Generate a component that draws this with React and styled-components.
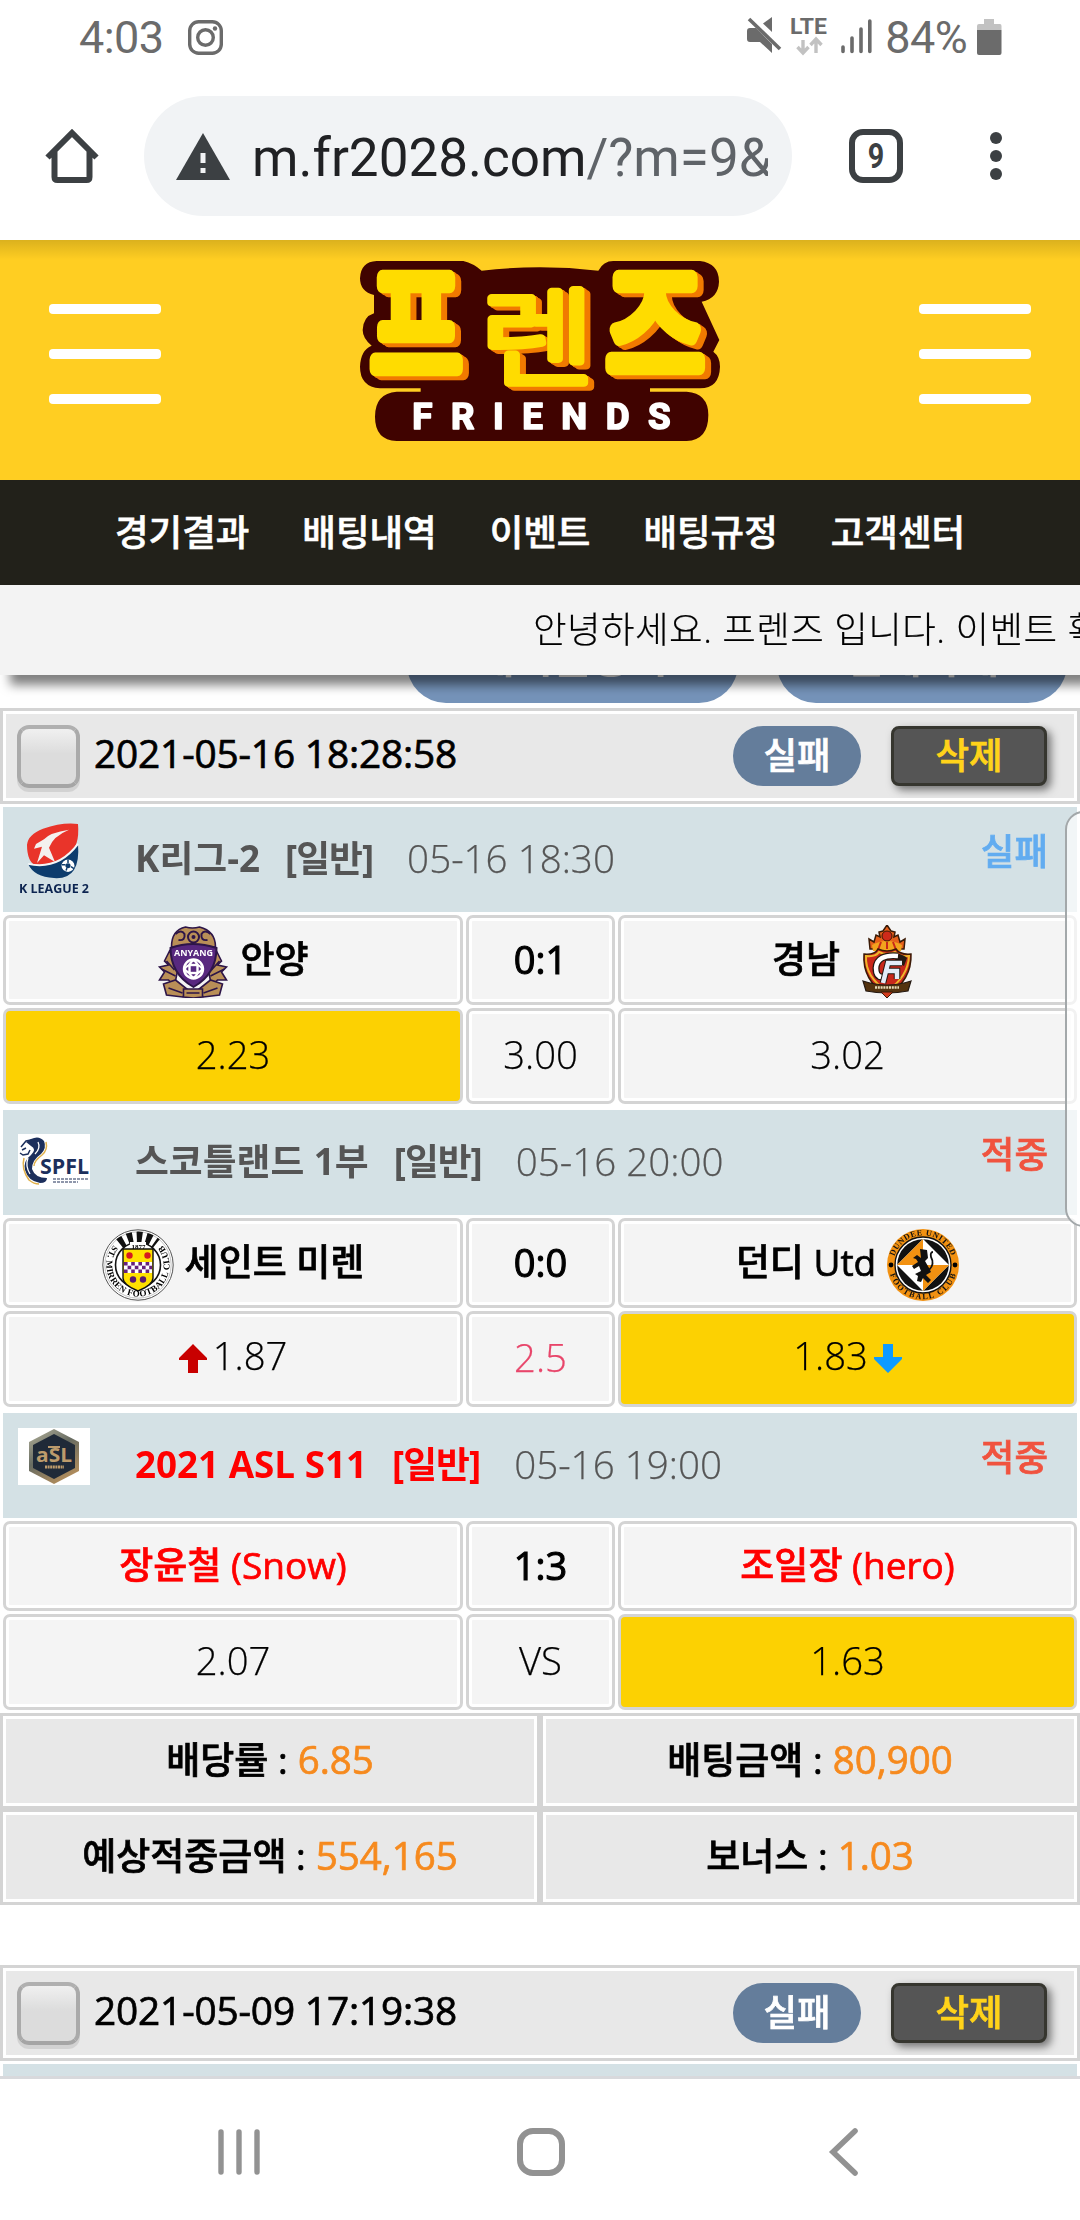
import styled, { createGlobalStyle } from "styled-components";

const GlobalStyle = createGlobalStyle`
  * {
    box-sizing: border-box;
  }

  body {
    margin: 0;
    background: #fff;
    font-family: "Open Sans", "Noto Sans CJK KR", sans-serif;
    line-height: 1;
    color: #000;
  }
`;

const Screen = styled.div`
  width: 1080px;
  height: 2220px;
  display: flex;
  flex-direction: column;
  overflow: hidden;
  position: relative;
  background: #fff;
`;

const StatusBar = styled.div`
  height: 60px;
  flex: none;
  display: flex;
  align-items: center;
  justify-content: space-between;
  padding: 14px 78px 0 79px;
  font-family: Roboto, sans-serif;
  font-size: 45px;
  color: #6b6b6b;

  svg {
    display: block;
    overflow: visible;
  }
`;

const StatusGroup = styled.div`
  display: flex;
  align-items: center;
  gap: ${(p) => p.$gap}px;

  span {
    letter-spacing: -0.6px;
  }
`;

const BrowserBar = styled.div`
  height: 180px;
  flex: none;
  display: flex;
  align-items: center;
  padding: 12px 78px 0 45px;

  svg {
    display: block;
    flex: none;
  }
`;

const UrlField = styled.div`
  width: 648px;
  height: 120px;
  margin: 0 57px 0 45px;
  padding: 0 24px 0 32px;
  border-radius: 60px;
  background: #f1f3f5;
  display: flex;
  align-items: center;
  gap: 22px;
`;

const Url = styled.div`
  flex: 1;
  padding-top: 3px;
  overflow: hidden;
  white-space: nowrap;
  font-family: Roboto, sans-serif;
  font-size: 53px;
  line-height: 70px;
  color: #202124;

  span {
    color: #5f6368;
  }
`;

const TabCount = styled.div`
  width: 54px;
  height: 54px;
  border: 6px solid #3c4043;
  border-radius: 14px;
  display: flex;
  align-items: center;
  justify-content: center;
  font: 700 35px Roboto, sans-serif;
  color: #3c4043;

  span {
    transform: scaleX(0.82);
  }
`;

const Dots = styled.div`
  margin-left: auto;
  display: flex;
  flex-direction: column;
  gap: 6px;

  i {
    width: 12px;
    height: 12px;
    border-radius: 50%;
    background: #3c4043;
  }
`;

const SiteHeader = styled.header`
  height: 240px;
  flex: none;
  display: flex;
  justify-content: space-between;
  align-items: flex-start;
  padding: 21px 49px 0;
  background: linear-gradient(rgba(0, 0, 0, 0.14), rgba(0, 0, 0, 0) 20px),
    #ffce22;
`;

const Burger = styled.div`
  width: 112px;
  margin-top: 43px;
  display: flex;
  flex-direction: column;
  gap: 35px;

  i {
    height: 10px;
    border-radius: 4px;
    background: #fff;
  }
`;

const LogoLetters = styled.g`
  font-family: "Noto Sans CJK KR", sans-serif;
  font-size: 300px;
  font-weight: 400;
  fill: #ffdc00;
  stroke: #ffdc00;
  stroke-width: 34px;
  stroke-linejoin: round;
  filter: drop-shadow(9px 6px 0 #f17a00) drop-shadow(9px 6px 0 #f17a00);

  .dense {
    font-weight: 300;
    stroke-width: 22px;
  }
`;

const Nav = styled.nav`
  height: 105px;
  flex: none;
  display: flex;
  align-items: center;
  gap: 53px;
  padding-left: 115px;
  background: #22211a;
  color: #fff;
  font-size: 36.5px;
  font-weight: 500;
  -webkit-text-stroke: 0.6px;
`;

const Notice = styled.div`
  height: 90px;
  flex: none;
  position: relative;
  z-index: 1;
  display: flex;
  align-items: center;
  padding: 0 0 1px 533px;
  background: #f3f3f3;
  box-shadow: 10px 10px 10px rgba(0, 0, 0, 0.5);
  font-size: 36.5px;
  font-weight: 300;
  letter-spacing: 0.45px;
  white-space: nowrap;
  -webkit-text-stroke: 0.2px;
`;

const ActionStrip = styled.div`
  height: 33px;
  flex: none;
  overflow: hidden;
  display: flex;
  align-items: flex-end;
  gap: 39px;
  padding: 0 0 5px 407px;
`;

const Action = styled.div`
  width: ${(p) => p.$width}px;
  height: 78px;
  border-radius: 39px;
  background: #7593b9;
  color: #fff;
  font-size: 42px;
  font-weight: 700;
  line-height: 64px;
  text-align: center;
`;

const Slip = styled.section`
  flex: none;
  display: flex;
  flex-direction: column;
  gap: 3px;
`;

const SlipHead = styled.div`
  height: 96px;
  display: flex;
  align-items: center;
  padding: 0 30px 0 14px;
  border: 3px solid #d4d4d4;
  outline: 3px solid #fff;
  outline-offset: -6px;
  background: #e8e8e8;
  font-size: 36.5px;
  font-weight: 500;
  -webkit-text-stroke: 0.7px;
`;

const SlipDate = styled.span`
  padding-bottom: 5px;
  font-size: 38.8px;
  letter-spacing: -0.15px;
`;

const Check = styled.div`
  width: 63px;
  height: 63px;
  margin-right: 14px;
  border: 4px solid;
  border-color: #b0b0b0 #aaa #a5a5a5;
  border-radius: 12px;
  background: linear-gradient(#f0f0f0, #dcdcdc 45%);
  box-shadow: 0 4px 0 #d2d2d2;
`;

const Badge = styled.div`
  width: 128px;
  height: 60px;
  margin-left: auto;
  padding-bottom: 2px;
  border-radius: 30px;
  background: #647d9b;
  color: #fff;
  display: flex;
  align-items: center;
  justify-content: center;
`;

const DeleteButton = styled.div`
  width: 156px;
  height: 60px;
  margin-left: 30px;
  padding-bottom: 2px;
  border: 3px solid #36362f;
  border-radius: 8px;
  background: #555;
  box-shadow: 4px 4px 8px rgba(0, 0, 0, 0.5);
  color: #ffd31a;
  display: flex;
  align-items: center;
  justify-content: center;
`;

const League = styled.div`
  height: 105px;
  margin: 0 3px;
  padding: 0 29px 3px 15px;
  display: flex;
  align-items: center;
  background: #d4e1e5;
  color: ${(p) => (p.$hot ? "#f00" : "#555")};
  font-size: 36.8px;
  white-space: nowrap;

  b {
    font-weight: 700;
    margin-right: 25px;
  }
  b + b {
    letter-spacing: -1px;
  }
  time {
    color: #555;
    font-size: 38.6px;
    font-weight: 300;
    margin-left: 9px;
    -webkit-text-stroke: 0.25px;
  }
`;

const LeagueLogo = styled.div`
  width: 72px;
  margin: ${(p) => p.$top}px 45px 0 0;
  align-self: flex-start;

  svg {
    display: block;
    overflow: visible;
  }
`;

const Result = styled.div`
  margin: 0 0 13px auto;
  font-size: 36.5px;
  font-weight: 500;
  -webkit-text-stroke: 0.7px;
  color: ${(p) => (p.$hit ? "#f0533f" : "#62acf0")};
`;

const Match = styled.div`
  display: grid;
  grid-template-columns: 460px 149px 459px;
  grid-template-rows: 90px 96px;
  gap: 3px;
  margin: 0 3px 3px;
`;

const Cell = styled.div`
  display: flex;
  align-items: center;
  justify-content: center;
  gap: ${(p) => p.$gap || 0}px;
  padding-bottom: 3px;
  border: 3px solid #d4d4d4;
  border-radius: 7px;
  background: #f4f4f4;
  box-shadow: inset 0 0 0 3px #fff;
  color: ${(p) => p.$color || "#000"};
  font-size: 37px;
  font-weight: 500;

  span {
    -webkit-text-stroke: 0.7px;
  }

  svg {
    display: block;
    flex: none;
    margin-top: 6px;
  }
`;

const ScoreCell = styled(Cell)`
  font-size: 38px;

  span {
    -webkit-text-stroke: 1.1px;
  }
`;

const OddsCell = styled(Cell)`
  padding-bottom: ${(p) => (p.$moved ? 7 : 4)}px;
  background: ${(p) => (p.$picked ? "#fcd102" : "#f4f4f4")};
  box-shadow: ${(p) => (p.$picked ? "none" : "inset 0 0 0 3px #fff")};
  font-size: 38.3px;
  font-weight: 300;

  span {
    -webkit-text-stroke: 0.25px;
  }
`;

const Totals = styled.div`
  display: grid;
  grid-template-columns: 540px 540px;
  grid-auto-rows: 96px;
`;

const Total = styled.div`
  display: flex;
  align-items: center;
  justify-content: center;
  gap: 10px;
  padding-bottom: 4px;
  border: 3px solid #d4d4d4;
  outline: 3px solid #fff;
  outline-offset: -6px;
  background: #e8e8e8;
  font-size: 37px;
  font-weight: 500;
  -webkit-text-stroke: 0.7px;

  em {
    font-size: 38.5px;
    font-style: normal;
    color: #f68a1e;
  }
`;

const Spacer = styled.div`
  height: 60px;
  flex: none;
`;

const SlipPeek = styled.div`
  height: 12px;
  margin: 0 3px;
  background: #d4e1e5;
`;

const SystemNav = styled.div`
  height: 144px;
  flex: none;
  display: flex;
  border-top: 3px solid #d8d9dc;
  background: #fff;
  padding: 49px 0 0 217px;

  svg {
    display: block;
  }
`;

// edge panel handle floating over the page
const EdgeHandle = styled.div`
  position: absolute;
  top: 811px;
  right: -22px;
  width: 37px;
  height: 416px;
  border: 2px solid #a3a8aa;
  border-radius: 22px;
  background: rgba(255, 255, 255, 0.7);
`;

const FriendsLogo = () => (
  <svg width="360" height="180" viewBox="60 33 1080 540">
    <path
      fill="#400300"
      d="M110 33H370Q400 40 425 62Q600 42 775 62Q790 33 820 33H1080Q1137 40 1137 95Q1135 145 1085 155L1138 270L1120 305Q1140 320 1140 350Q1138 415 1080 415H930V425H1040Q1105 430 1105 495Q1105 570 1040 573H170Q105 570 105 500Q105 430 170 425H242V415H120Q60 410 60 350Q62 300 95 287Q68 265 68 240Q70 200 102 190V135Q60 125 60 85Q62 35 110 33Z"
    />
    <LogoLetters>
      <text transform="translate(91 370) scale(1 1.3)">프</text>
      <text className="dense" transform="translate(419 381) scale(1.25 1.06)">렌</text>
      <text transform="translate(798 368) scale(1.07 1.3)">즈</text>
    </LogoLetters>
    <text
      x="217"
      y="537"
      fill="#fff"
      stroke="#fff"
      strokeWidth="5"
      strokeLinejoin="round"
      fontFamily="Roboto"
      fontWeight="700"
      fontSize="110"
      textLength="775"
    >
      FRIENDS
    </text>
  </svg>
);

const KLeagueLogo = () => (
  <svg width="72" height="72" viewBox="0 0 72 72">
    <g transform="scale(1 0.95)">
      <path d="M9 23Q10 12 25 6Q44 -1 60 1Q62 25 50 34Q38 44 18 45Q9 41 9 23Z" fill="#e9342a" />
      <path d="M10 43Q40 50 60 22Q63 60 36 58Q16 57 10 43Z" fill="#0d3c6d" />
      <path d="M10 43Q40 50 60 22" fill="none" stroke="#f4f6f7" strokeWidth="2" />
      <path d="M51 7Q32 10 26 17L18 22L16 27L24 25L19 42L26 34L37 41L31 26Q35 14 51 7Z" fill="#f4f1ef" />
      <circle cx="50" cy="45" r="6.5" fill="#fff" />
      <circle cx="50" cy="45" r="2.6" fill="#0d3c6d" />
      <path d="M50 38.5V42M44 44H47.5M53 46L56 48M48 50L49 47.5" stroke="#0d3c6d" strokeWidth="1.5" />
    </g>
    <text x="1" y="70" fontSize="12" fontWeight="700" fontFamily="Open Sans" fill="#0c2450" textLength="70" lengthAdjust="spacingAndGlyphs">
      K LEAGUE 2
    </text>
  </svg>
);

const SpflLogo = () => (
  <svg width="72" height="55" viewBox="0 0 72 55">
    <rect width="72" height="55" fill="#fff" />
    <path d="M13 5Q21 1 26 7Q29 14 23 20Q14 26 14 35Q17 44 29 44Q29 49 22 49Q10 47 7 36Q5 27 13 21Q19 15 13 12L8 8Z" fill="#1c2f5c" />
    <path d="M6 24Q3 35 11 46Q16 50 21 50" fill="none" stroke="#e0b04a" strokeWidth="1.5" />
    <path d="M28 8Q30 16 24 21Q16 27 16 32" fill="none" stroke="#e0b04a" strokeWidth="1.5" />
    <path d="M10 24Q7 32 12 40M20 8Q23 14 17 20" fill="none" stroke="#fff" strokeWidth="1.3" />
    <path d="M3 13L8 7L13 6M2 19L5 21L10 20L12 16M4 16L8 14" stroke="#1c2f5c" strokeWidth="1.5" fill="none" />
    <text x="22" y="40" fontSize="20.5" fontWeight="700" fontFamily="Open Sans" fill="#1c2f5c" textLength="49" lengthAdjust="spacingAndGlyphs">
      SPFL
    </text>
    <path d="M35 45H70M35 48H60" stroke="#6b7690" strokeWidth="1.4" strokeDasharray="3 1" />
  </svg>
);

const AslLogo = () => (
  <svg width="72" height="57" viewBox="0 0 72 57">
    <defs>
      <linearGradient id="aslFrame" x1="0" y1="0" x2="0.6" y2="1">
        <stop offset="0" stopColor="#b5b39c" />
        <stop offset="0.5" stopColor="#686c62" />
        <stop offset="1" stopColor="#b08c5c" />
      </linearGradient>
    </defs>
    <rect width="72" height="57" fill="#fff" />
    <path d="M36 1L61 14V43L36 56L11 43V14Z" fill="url(#aslFrame)" />
    <path d="M36 6L57 17V40L36 51L15 40V17Z" fill="#202a38" />
    <text x="18" y="34" fontSize="19" fontWeight="700" fontFamily="Open Sans" fill="#bd9b6c" textLength="36" lengthAdjust="spacingAndGlyphs">
      aSL
    </text>
    <path d="M30 19H42" stroke="#bd9b6c" strokeWidth="2" />
    <path d="M27 39H46" stroke="#bd9b6c" strokeWidth="3" strokeDasharray="2 0.6" />
  </svg>
);

const AnyangCrest = () => (
  <svg width="72" height="72" viewBox="-1.5 0 72 72">
    <g fill="#b98f57" stroke="#2d1548" strokeWidth="1.6">
      <path d="M13 21Q13 4 27 1Q34 3 41 1Q57 5 57 21Z" />
      <path d="M11 25L6 35L10 39L1 41L6 46L1 54L10 54L16 60L20 40Z" />
      <path d="M58 25L63 35L59 39L68 41L63 46L68 54L59 54L53 60L49 40Z" />
      <path d="M5 58L17 54L31 65L24 71L8 69Z" />
      <path d="M64 58L52 54L38 65L45 71L61 69Z" />
      <path d="M25 63H44V71L35 72L25 71Z" />
      <path d="M3 43L17 50M66 43L52 50M8 35L16 44M61 35L53 44M10 62L24 67M59 62L45 67M28 67H41" fill="none" />
    </g>
    <path d="M17 8Q23 3 26 8Q27 15 20 14M52 8Q46 3 43 8Q42 15 49 14" fill="none" stroke="#2d1548" strokeWidth="2" />
    <path d="M12 22Q34 14 58 22Q58 48 35 61Q12 48 12 22Z" fill="#58287f" stroke="#2d1548" strokeWidth="2" />
    <circle cx="35" cy="11" r="5.5" fill="#b98f57" stroke="#2d1548" strokeWidth="2" />
    <circle cx="35" cy="11" r="2" fill="#2d1548" />
    <text x="15.5" y="30" fontSize="8" fontWeight="700" fontFamily="Open Sans" fill="#fff" textLength="39" lengthAdjust="spacingAndGlyphs">
      ANYANG
    </text>
    <g fill="none" stroke="#fff" strokeWidth="2.4">
      <circle cx="35" cy="43" r="9.5" />
      <rect x="31" y="39" width="8" height="8" />
      <path d="M31 39Q35 30 39 39M31 47Q35 56 39 47M31 39Q22 43 31 47M39 39Q48 43 39 47" />
    </g>
  </svg>
);

const GyeongnamCrest = () => (
  <svg width="72" height="73" viewBox="-11 0 72 73">
    <path d="M8 24L7 14L12 17L14 10L18 12L17 7L21 6L25 0L29 6L33 7L32 12L36 10L38 17L43 14L42 24Z" fill="#e6611c" stroke="#3a1a06" strokeWidth="1.5" />
    <path d="M10 20Q25 12 40 20L39 26H11Z" fill="#f2a41d" />
    <circle cx="25" cy="11" r="5" fill="#cf2a1a" stroke="#3a1a06" />
    <path d="M16 25L19 17M25 24V17M34 25L31 17" stroke="#c8281b" strokeWidth="2" />
    <path d="M2 29Q13 30 16 24Q25 28 34 24Q38 30 49 29Q50 55 25 71Q0 55 2 29Z" fill="#c8281b" stroke="#3a1a06" strokeWidth="1.5" />
    <path d="M4 31Q14 32 17 27Q25 31 33 27Q38 32 47 31Q46 52 25 66Q3 52 4 31Z" fill="none" stroke="#f0b62a" strokeWidth="2" />
    <path d="M35 28Q44 31 45 33L42 41L33 36Z" fill="#241912" />
    <path d="M36 31Q15 29 14 43Q14 52 20 52" fill="none" stroke="#241912" strokeWidth="7" />
    <path d="M36 31Q15 29 14 43Q14 52 20 52" fill="none" stroke="#fff" strokeWidth="4.5" />
    <path d="M40 38H26L21 58M25 46H35V54" fill="none" stroke="#241912" strokeWidth="6.5" />
    <path d="M40 38H26L21 58M25 46H35V54" fill="none" stroke="#e3ecf7" strokeWidth="4.5" />
    <path d="M1 56Q25 64 49 56L46 66Q25 70 4 66Z" fill="#54330f" stroke="#241912" strokeWidth="1.2" />
    <path d="M13 62.5H37" stroke="#e9ddb8" strokeWidth="2.6" strokeDasharray="2 0.8" />
    <path d="M19 67H31L25 73Z" fill="#d13b1c" stroke="#3a1a06" />
  </svg>
);

const StMirrenCrest = () => (
  <svg width="72" height="74" viewBox="0 0 72 74">
    <defs>
      <path id="mirrenRing" d="M13.5 15A31.5 31.5 0 1 0 58.5 15" />
    </defs>
    <circle cx="36" cy="37" r="35.2" fill="#fff" stroke="#555" strokeWidth="1" />
    <circle cx="36" cy="37" r="33.2" fill="none" stroke="#aaa" strokeWidth="0.7" />
    <path d="M18 15A28.5 28.5 0 0 1 54 15" fill="none" stroke="#111" strokeWidth="12" strokeDasharray="5.2 3.9" transform="translate(0 1)" />
    <circle cx="36" cy="37" r="22.5" fill="#fff" stroke="#111" strokeWidth="1.6" />
    <rect x="28" y="14" width="16" height="7" fill="#fff" />
    <text x="29.5" y="20.5" fontSize="7" fontFamily="Liberation Serif" fontWeight="700">
      1877
    </text>
    <path d="M21 21H51V50Q51 57 36 63Q21 57 21 50Z" fill="#ffe100" stroke="#111" strokeWidth="1.4" />
    <rect x="22" y="34" width="28" height="11" fill="#fff" />
    <path d="M22 35.8H50M22 43.2H50" stroke="#66217c" strokeWidth="3.6" strokeDasharray="3.6 3.6" />
    <path d="M25.6 39.5H50" stroke="#66217c" strokeWidth="3.6" strokeDasharray="3.6 3.6" />
    <g fill="#d61820">
      <circle cx="27.5" cy="27.5" r="3.2" />
      <circle cx="45.5" cy="27.5" r="3.2" />
    </g>
    <g fill="#5a1a6e">
      <circle cx="31" cy="51.5" r="3.2" />
      <circle cx="41" cy="51.5" r="3.2" />
    </g>
    <text fontSize="9" fontFamily="Liberation Serif" fontWeight="700">
      <textPath href="#mirrenRing" startOffset="3" textLength="141">
        ST. MIRREN FOOTBALL CLUB
      </textPath>
    </text>
  </svg>
);

const DundeeCrest = () => (
  <svg width="72" height="74" viewBox="0 0 72 74">
    <defs>
      <path id="dundeeTop" d="M7.5 28.3A29.8 29.8 0 0 1 64.5 28.3" />
      <path id="dundeeBottom" d="M3 46.3A34.3 34.3 0 0 0 69 46.3" />
    </defs>
    <circle cx="36" cy="37" r="36" fill="#f29111" />
    <circle cx="36" cy="37" r="28" fill="#fff" stroke="#111" strokeWidth="1.4" />
    <circle cx="36" cy="37" r="25.8" fill="#111" />
    <path d="M36 11L62 37L36 63L10 37Z" fill="#fff" />
    <path d="M36 11V37H10ZM36 63V37H62Z" fill="#f29111" />
    <path
      d="M33 21L40 22L41 30L38 33L42 40L44 44L39 47L44 52L41 55L36 50L34 54L30 53L31 48L28 46L34 43L32 38L27 41L25 38L31 34L29 31L26 30L30 27L34 30Z"
      fill="#111"
    />
    <path d="M42 42Q48 36 44 29Q43 24 46 24" fill="none" stroke="#111" strokeWidth="1.8" />
    <circle cx="4" cy="37" r="2.4" />
    <circle cx="68" cy="37" r="2.4" />
    <g fontSize="8.2" fontFamily="Liberation Serif" fontWeight="700" fill="#111">
      <text>
        <textPath href="#dundeeTop" textLength="75">
          DUNDEE UNITED
        </textPath>
      </text>
      <text>
        <textPath href="#dundeeBottom" textLength="88">
          FOOTBALL CLUB
        </textPath>
      </text>
    </g>
  </svg>
);

const UpArrow = () => (
  <svg width="28" height="29" viewBox="0 0 28 29">
    <path d="M14 0L28 14V16H19V29H9V16H0V14Z" fill="#c80000" />
  </svg>
);

const DownArrow = () => (
  <svg width="28" height="29" viewBox="0 0 28 29">
    <path d="M14 29L28 15V13H19V0H9V13H0V15Z" fill="#0d9bff" />
  </svg>
);

const navItems = ["경기결과", "배팅내역", "이벤트", "배팅규정", "고객센터"];

const matches = [
  {
    logo: <KLeagueLogo />,
    logoTop: 16,
    league: "K리그-2",
    time: "05-16 18:30",
    result: "실패",
    home: "안양",
    homeCrest: <AnyangCrest />,
    away: "경남",
    awayCrest: <GyeongnamCrest />,
    score: "0:1",
    odds: ["2.23", "3.00", "3.02"],
    pick: 0,
  },
  {
    logo: <SpflLogo />,
    logoTop: 24,
    league: "스코틀랜드 1부",
    time: "05-16 20:00",
    result: "적중",
    home: "세인트 미렌",
    homeCrest: <StMirrenCrest />,
    away: "던디 Utd",
    awayCrest: <DundeeCrest />,
    score: "0:0",
    odds: ["1.87", "2.5", "1.83"],
    moved: true,
    pick: 2,
  },
  {
    logo: <AslLogo />,
    logoTop: 15,
    league: "2021 ASL S11",
    hot: true,
    time: "05-16 19:00",
    result: "적중",
    home: "장윤철 (Snow)",
    away: "조일장 (hero)",
    score: "1:3",
    odds: ["2.07", "VS", "1.63"],
    pick: 2,
  },
];

const totals = [
  ["배당률 :", "6.85"],
  ["배팅금액 :", "80,900"],
  ["예상적중금액 :", "554,165"],
  ["보너스 :", "1.03"],
];

const SlipHeader = ({ date }) => (
  <SlipHead>
    <Check />
    <SlipDate>{date}</SlipDate>
    <Badge>실패</Badge>
    <DeleteButton>삭제</DeleteButton>
  </SlipHead>
);

const MatchRow = ({ match }) => {
  const nameColor = match.hot ? "#f00" : "#000";
  return (
    <>
      <League $hot={match.hot}>
        <LeagueLogo $top={match.logoTop}>{match.logo}</LeagueLogo>
        <b>{match.league}</b>
        <b>[일반]</b>
        <time>{match.time}</time>
        <Result $hit={match.result === "적중"}>{match.result}</Result>
      </League>
      <Match>
        <Cell $color={nameColor} $gap={11}>
          {match.homeCrest}
          <span>{match.home}</span>
        </Cell>
        <ScoreCell>
          <span>{match.score}</span>
        </ScoreCell>
        <Cell $color={nameColor} $gap={11}>
          <span>{match.away}</span>
          {match.awayCrest}
        </Cell>
        <OddsCell $gap={6} $moved={match.moved} $picked={match.pick === 0}>
          {match.moved && <UpArrow />}
          <span>{match.odds[0]}</span>
        </OddsCell>
        <OddsCell $color={match.moved && "#e8456a"}>
          <span>{match.odds[1]}</span>
        </OddsCell>
        <OddsCell $gap={6} $moved={match.moved} $picked={match.pick === 2}>
          <span>{match.odds[2]}</span>
          {match.moved && <DownArrow />}
        </OddsCell>
      </Match>
    </>
  );
};

const App = () => {
  return (
    <Screen>
      <GlobalStyle />
      <StatusBar>
        <StatusGroup $gap={25}>
          <span>4:03</span>
          <svg width="35" height="35" viewBox="0 0 35 35" fill="none" stroke="#6b6b6b" strokeWidth="3.4">
            <rect x="1.7" y="1.7" width="31.6" height="31.6" rx="9" />
            <circle cx="17.5" cy="17.5" r="7.8" />
            <circle cx="27" cy="8.5" r="2.2" fill="#6b6b6b" stroke="none" />
          </svg>
        </StatusGroup>
        <StatusGroup $gap={10}>
          <svg width="128" height="40" viewBox="0 0 128 40">
            <path d="M0 14Q0 11 3 11H9L25 27V36L13 25H3Q0 25 0 22Z" fill="#6b6b6b" />
            <path d="M25 0V15L16 6.5Z" fill="#6b6b6b" />
            <path d="M2 2L33 32" stroke="#6b6b6b" strokeWidth="3.6" />
            <text x="43" y="17" fontSize="22" fontWeight="700" fontFamily="Roboto" fill="#6b6b6b" textLength="37" lengthAdjust="spacingAndGlyphs">
              LTE
            </text>
            <path d="M56 23V35M50.5 30L56 36L61.5 30M69 36V24M63.5 28L69 22L74.5 28" stroke="#c2c2c2" strokeWidth="3.4" fill="none" />
            <path d="M96 30V34.5M105 21V34.5M114 12V34.5M122.8 4V34.5" stroke="#6b6b6b" strokeWidth="3.6" strokeLinecap="round" />
          </svg>
          <span>84%</span>
          <svg width="25" height="36" viewBox="0 0 25 36">
            <path d="M7 0H17V5H23Q24.5 5 24.5 7V11H0V7Q0 5 2 5H7Z" fill="#c2c2c2" />
            <path d="M0 11H24.5V34Q24.5 36 22.5 36H2Q0 36 0 34Z" fill="#6b6b6b" />
          </svg>
        </StatusGroup>
      </StatusBar>

      <BrowserBar>
        <svg width="54" height="54" viewBox="0 0 54 54">
          <path d="M2.5 28.5L27 4L51.5 28.5M9.5 22V48Q9.5 51 12.5 51H41.5Q44.5 51 44.5 48V22" fill="none" stroke="#3c4043" strokeWidth="6" />
        </svg>
        <UrlField>
          <svg width="54" height="47" viewBox="0 0 54 47">
            <path d="M27 0L54 47H0Z" fill="#3c4043" />
            <path d="M24.5 20H29.5V30H24.5ZM24.5 35H29.5V40H24.5Z" fill="#f1f3f5" />
          </svg>
          <Url>
            m.fr2028.com<span>/?m=9&amp;</span>
          </Url>
        </UrlField>
        <TabCount>
          <span>9</span>
        </TabCount>
        <Dots>
          <i />
          <i />
          <i />
        </Dots>
      </BrowserBar>

      <SiteHeader>
        <Burger>
          <i />
          <i />
          <i />
        </Burger>
        <FriendsLogo />
        <Burger>
          <i />
          <i />
          <i />
        </Burger>
      </SiteHeader>
      <Nav>
        {navItems.map((item) => (
          <span key={item}>{item}</span>
        ))}
      </Nav>
      <Notice>안녕하세요. 프렌즈 입니다. 이벤트 확인</Notice>
      <ActionStrip>
        <Action $width={331}>게시글등록</Action>
        <Action $width={290}>전체삭제</Action>
      </ActionStrip>

      <Slip>
        <SlipHeader date="2021-05-16 18:28:58" />
        {matches.map((match) => (
          <MatchRow key={match.league} match={match} />
        ))}
      </Slip>
      <Totals>
        {totals.map(([label, value]) => (
          <Total key={label}>
            <span>{label}</span>
            <em>{value}</em>
          </Total>
        ))}
      </Totals>
      <Spacer />
      <Slip>
        <SlipHeader date="2021-05-09 17:19:38" />
        <SlipPeek />
      </Slip>

      <SystemNav>
        <svg width="641" height="48" viewBox="0 0 641 48" fill="none" stroke="#929292">
          <path d="M4 4V44M22 4V44M40 4V44" strokeWidth="5.4" strokeLinecap="round" />
          <rect x="303" y="3" width="42" height="42" rx="13" strokeWidth="6" />
          <path d="M638 3L616 24L638 45" strokeWidth="5.6" strokeLinecap="round" />
        </svg>
      </SystemNav>
      <EdgeHandle />
    </Screen>
  );
};

export default App;
